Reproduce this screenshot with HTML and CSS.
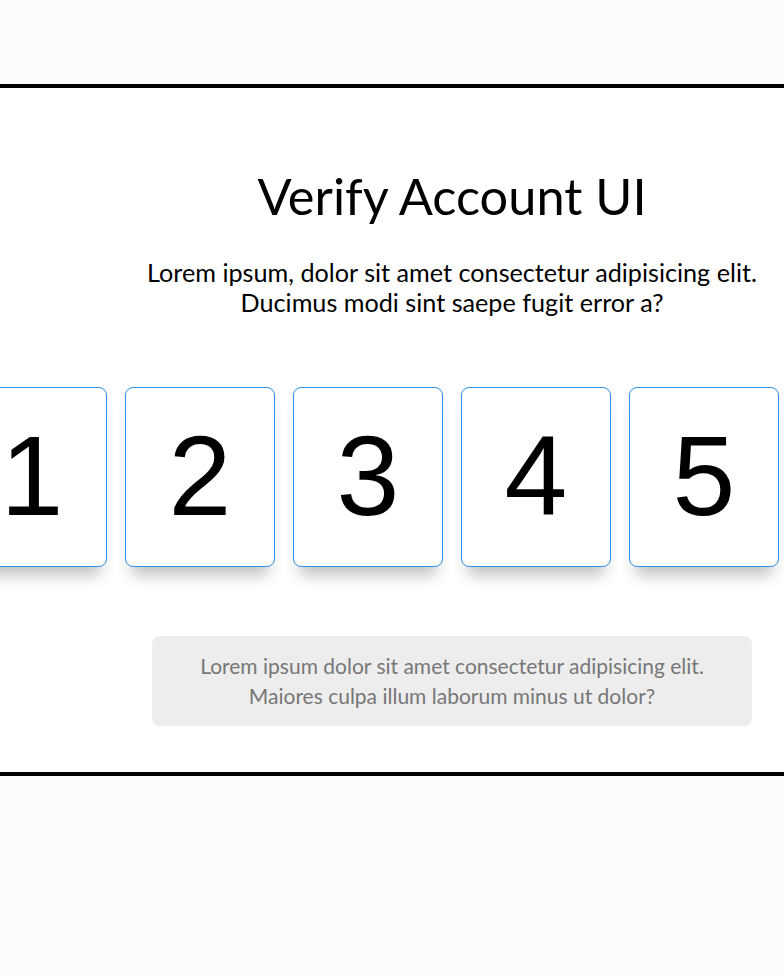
FILE: index.html
```html
<!DOCTYPE html>
<html lang="en">
<head>
<meta charset="UTF-8">
<title>Verify Account UI</title>
<link rel="stylesheet" href="styles.css">
</head>
<body>
  <div class="container">
    <h1 class="title">Verify Account UI</h1>
    <p class="lead">Lorem ipsum, dolor sit amet consectetur adipisicing elit.<br>Ducimus modi sint saepe fugit error a?</p>
    <div class="code-container">
      <div class="code">1</div>
      <div class="code">2</div>
      <div class="code">3</div>
      <div class="code">4</div>
      <div class="code">5</div>
      <div class="code">6</div>
    </div>
    <div class="info">Lorem ipsum dolor sit amet consectetur adipisicing elit.<br>Maiores culpa illum laborum minus ut dolor?</div>
  </div>
</body>
</html>
```

FILE: styles.css
```css
* { box-sizing: border-box; }

html, body {
  overflow: hidden;
}

body {
  margin: 0;
  height: 976px;
  background-color: #fbfcfe;
  font-family: Lato, "Noto Sans", sans-serif;
}

.container {
  width: 1100px;
  margin: 84px 0 0 -98px;
  background-color: #fff;
  border: 4px solid #000;
  border-radius: 15px;
  padding: 78px 0 46px;
  text-align: center;
}

.title {
  margin: 0;
  font-size: 50.5px;
  line-height: 60px;
  font-weight: 400;
  color: #000;
}

.lead {
  margin: 31px 0 0;
  font-size: 25.2px;
  line-height: 30px;
  color: #000;
}

.code-container {
  display: flex;
  justify-content: center;
  gap: 18px;
  margin: 70px 0 69px;
}

.code {
  width: 150px;
  height: 180px;
  border: 1.5px solid #2b93f0;
  border-radius: 8px;
  background: #fff;
  box-shadow: 0 15px 15px -7px rgba(0, 0, 0, 0.25);
  font-family: "Liberation Sans", Arial, sans-serif;
  font-size: 113px;
  line-height: 176px;
  text-align: center;
  color: #000;
}

.info {
  width: 600px;
  margin: 0 auto;
  padding: 15px 30px;
  background-color: #ededed;
  border-radius: 8px;
  color: #777;
  font-size: 21px;
  line-height: 30px;
}
```
